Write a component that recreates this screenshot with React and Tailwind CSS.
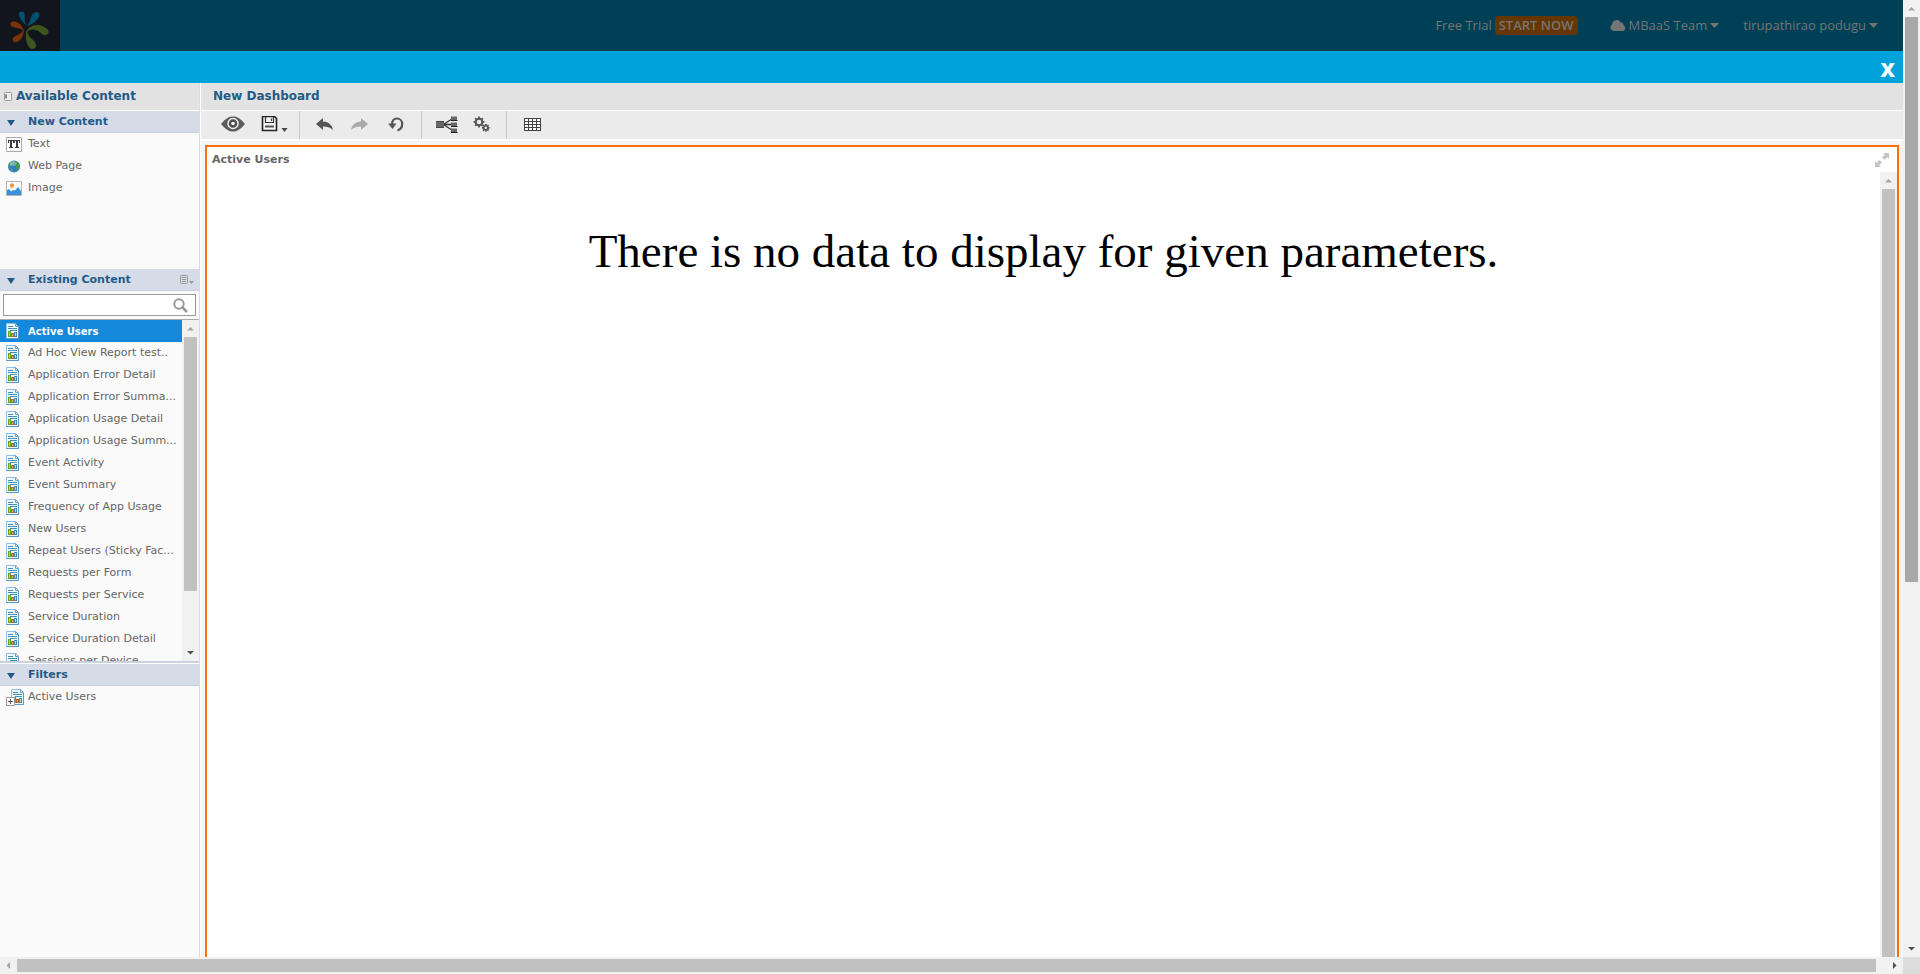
import React from "react";

const reports = [
  "Active Users",
  "Ad Hoc View Report test..",
  "Application Error Detail",
  "Application Error Summa...",
  "Application Usage Detail",
  "Application Usage Summ...",
  "Event Activity",
  "Event Summary",
  "Frequency of App Usage",
  "New Users",
  "Repeat Users (Sticky Fac...",
  "Requests per Form",
  "Requests per Service",
  "Service Duration",
  "Service Duration Detail",
  "Sessions per Device",
];

function Logo() {
  return (
    <svg width="60" height="51" viewBox="0 0 60 51" aria-hidden="true">
      <path d="M26.500 25.500C22 22 18.500 17 19 13.500C19.500 10.800 24 10.800 24.800 14C25 18 24 21 26.500 25.500Z" fill="#005070" />
      <path d="M27 25.500C32 25.500 38 20 39.300 16C40.300 12.500 37 11 34 13C30 15.500 31 22 27 25.500Z" fill="#005070" />
      <path d="M23.500 31C22.500 29 19 28.500 15 27.500C10 27 9 23 12 21.800C17 20.500 22 24 23.500 31Z" fill="#7a3206" />
      <path d="M23.500 28C25 35 20 42.500 15 42.200C11.500 41 12 37.500 15.500 36C20 34 22.500 33 23.500 28Z" fill="#7a3206" />
      <path d="M26.500 33C27 26 37 22.500 44 27C49.500 29 50 34 46 35C42 36 41 32 37 30.500C33 29 29.500 29 26.500 33Z" fill="#3c561e" />
      <path d="M26.500 30C24.500 38 27 46.500 31 48.800C35 49.800 37 46.500 35.500 43C34 39.500 28.500 38 26.500 30Z" fill="#3c561e" />
    </svg>
  );
}

function Caret({ className = "" }) {
  return (
    <svg width="9" height="5" viewBox="0 0 9 5" className={className} aria-hidden="true">
      <path d="M0 0h9L4.500 5z" fill="currentColor" />
    </svg>
  );
}

function ReportIcon({ filter = false }) {
  return (
    <svg width={filter ? 18 : 13} height="17" viewBox={filter ? "0 0 18 17" : "0 0 13 17"} aria-hidden="true">
      <g transform={filter ? "translate(5 0)" : undefined}>
        <path d="M.5 .5h9l3 3V15.500H.5z" fill="#f2f9fe" stroke="#8fc0ea" />
        <path d="M.5 15.500h12V4" fill="none" stroke="#5b97cf" />
        <path d="M9.500 .5v3h3z" fill="#fff" stroke="#67a3d6" />
        <path d="M2 3.500h5M2 5.500h9M4 7.500h7" stroke="#3c93b0" />
        <path d="M2 8h3v6H2z" fill="#6f9f1e" />
        <path d="M3 9h1v4H3z" fill="#b4d651" />
        <path d="M5 10h3v4H5z" fill="#b9652a" />
        <path d="M6 11h1v2H6z" fill="#f0a866" />
        <path d="M8 9h3v5H8z" fill="#3f8fb3" />
        <path d="M9 10h1v3H9z" fill="#a5dcec" />
      </g>
      {filter && (
        <g>
          <path d="M.5 8.500h8v8h-8z" fill="#fff" stroke="#9a9a9a" />
          <path d="M2 12.500h5M4.500 10v5" stroke="#555" />
        </g>
      )}
    </svg>
  );
}

function TextIcon() {
  return (
    <svg width="16" height="15" viewBox="0 0 16 15" aria-hidden="true">
      <path d="M.5.5h15v14H.5z" fill="#fff" stroke="#aaa" />
      <path d="M2 3h6v3H7V4H6v6h1v1H3v-1h1V4H3v2H2zM8 3h6v3h-1V4h-1v6h1v1H9v-1h1V4H9v2H8z" fill="#3a3a3a" />
    </svg>
  );
}

function GlobeIcon() {
  return (
    <svg width="16" height="13" viewBox="0 0 16 13" aria-hidden="true">
      <circle cx="8" cy="6.500" r="6" fill="#2f7fc0" />
      <path d="M3 3.500C5 1 7 .5 8 1l1 2-2 2-2 1-2 1-1-1z" fill="#4f9f6f" />
      <path d="M10 2l3 1 1 3-1 3-2 1-1-3-1-2z" fill="#46964e" />
      <path d="M5 8l2 1v3L5 11z" fill="#4f9f6f" />
      <ellipse cx="7" cy="3.500" rx="3.500" ry="2.500" fill="#d8f0f6" opacity=".35" />
    </svg>
  );
}

function ImageIcon() {
  return (
    <svg width="16" height="15" viewBox="0 0 16 15" aria-hidden="true">
      <path d="M.5.5h15v14H.5z" fill="#fff" stroke="#b4b4b4" />
      <circle cx="6" cy="4.500" r="2.200" fill="#e8974a" />
      <path d="M1 9l2-1 2 2.500L7 9l2 .500L12 6l3 4v4H1z" fill="#3a8fd8" />
    </svg>
  );
}

function SectionHeader({ title, children }) {
  return (
    <div className="flex h-[22px] shrink-0 items-center border-b border-[#c5cfdd] bg-[#d5dce8] pr-[5px] pl-[7px]">
      <button aria-label={"Collapse " + title} className="w-[21px] pt-[3px] text-[#1f5b88]">
        <svg width="8" height="6" viewBox="0 0 8 6" aria-hidden="true">
          <path d="M0 0h8L4 6z" fill="currentColor" />
        </svg>
      </button>
      <h2 className="flex-1 text-[11px] leading-[20px] font-bold text-[#1f5b88]">{title}</h2>
      {children}
    </div>
  );
}

function Item({ icon, label, selected }) {
  return (
    <li>
      <button
        className={
          selected
            ? "flex h-[22px] w-full items-center bg-[#1488da] pl-[6px] text-left text-[11px] text-white"
            : "flex h-[22px] w-full items-center pl-[6px] text-left text-[11px] text-[#666]"
        }
      >
        <span className="w-[22px] shrink-0">{icon}</span>
        <span className={selected ? "text-[10px] font-bold whitespace-nowrap" : "whitespace-nowrap"}>{label}</span>
      </button>
    </li>
  );
}

const arrows = {
  up: "M5 10.500L8.500 7L12 10.500z",
  down: "M5 7L8.500 10.500L12 7z",
  left: "M10 5L6.500 8.500L10 12z",
  right: "M7 5L10.500 8.500L7 12z",
};

function ScrollArrow({ dir, dark }) {
  return (
    <button aria-label={"Scroll " + dir} className="size-[17px] shrink-0">
      <svg width="17" height="17" viewBox="0 0 17 17" aria-hidden="true">
        <path d={arrows[dir]} fill={dark ? "#505050" : "#a3a3a3"} />
      </svg>
    </button>
  );
}

function Separator() {
  return <span className="h-7 w-px bg-[#cbcbcb]" />;
}

function Tool({ label, className, children }) {
  return (
    <button aria-label={label} className={"flex h-7 items-center justify-center pb-[2px] text-[#555] " + className}>
      {children}
    </button>
  );
}

function Gear({ cx, cy, r, w }) {
  const teeth = [0, 45, 90, 135, 180, 225, 270, 315];
  return (
    <g>
      <circle cx={cx} cy={cy} r={r} fill="none" stroke="currentColor" strokeWidth={w} />
      {teeth.map((a) => (
        <path
          key={a}
          d={`M${cx - 0.9} ${cy - r - w / 2 - 1.1}h1.800v1.600h-1.800z`}
          transform={`rotate(${a} ${cx} ${cy})`}
          fill="currentColor"
        />
      ))}
    </g>
  );
}

function Toolbar() {
  return (
    <div className="flex h-7 shrink-0 items-center bg-[#ebebeb]">
      <Tool label="Preview" className="ml-4 w-[31px]">
        <svg width="24" height="16" viewBox="0 0 24 16">
          <path d="M0 8C5 2 8.500.5 12 .5S19 2 24 8c-5 6-8.500 7.500-12 7.500S5 14 0 8z" fill="#5c5c5c" />
          <circle cx="12" cy="7.500" r="5" fill="#4d4d4d" stroke="#ebebeb" strokeWidth="1.500" />
          <circle cx="12" cy="7.500" r="1.800" fill="#fff" />
        </svg>
      </Tool>
      <Tool label="Save" className="ml-[11px] w-[31px]">
        <svg width="27" height="16" viewBox="0 0 27 16">
          <path d="M1.500 .5h12l2 2v12h-14z" fill="#f4f4f4" stroke="#222" strokeWidth="1.600" />
          <path d="M4.500 1v5.500h8V1M10.500 2.500v2.500" fill="none" stroke="#333" strokeWidth="1.200" />
          <path d="M4 9.500h9v2H4z" fill="#555" />
          <path d="M20.500 12h6l-3 4z" fill="#444" />
        </svg>
      </Tool>
      <span className="w-[9px]" />
      <Separator />
      <Tool label="Undo" className="ml-[12px] w-[24px]">
        <svg width="17" height="13" viewBox="0 0 17 13">
          <path d="M0 6L7 0v3.500c5 0 9 3 10 8.500C14 9 11 8.500 7 8.500V12z" fill="currentColor" />
        </svg>
      </Tool>
      <Tool label="Redo" className="ml-[11px] w-[24px]">
        <svg width="17" height="13" viewBox="0 0 17 13">
          <path d="M17 6L10 0v3.500C5 3.500 1 6.500 0 12c3-3 6-3.500 10-3.500V12z" fill="#aaa" />
        </svg>
      </Tool>
      <Tool label="Undo all" className="ml-[13px] w-[24px]">
        <svg width="16" height="15" viewBox="0 0 16 15">
          <path d="M4 8C4 4 6 1.500 9 1.500S14.200 4 14.200 7c0 3-2 5.500-4.700 6.500" fill="none" stroke="currentColor" strokeWidth="2.200" />
          <path d="M0 6.500h8.500L4.500 12z" fill="currentColor" />
        </svg>
      </Tool>
      <span className="w-[13px]" />
      <Separator />
      <Tool label="Filter manager" className="ml-[12px] w-[26px]">
        <svg width="22" height="17" viewBox="0 0 22 17">
          <path d="M8 8L16 3M8 8.500h8M8 9l8 5" stroke="#333" strokeWidth="1.300" />
          <path d="M0 5h8v7H0z" fill="#666" />
          <path d="M0 5.500h8M0 11.500h8" stroke="#444" />
          <path d="M15 .5h6v4h-6zM15 6.500h6v4h-6zM15 12.500h6v4h-6z" fill="#666" />
          <path d="M15 4.500h6.500M15 10.500h6.500M15 16.500h6.500" stroke="#222" />
        </svg>
      </Tool>
      <Tool label="Dashboard properties" className="ml-2 w-[26px]">
        <svg width="17" height="16" viewBox="0 0 17 16">
          <Gear cx={6} cy={6} r={3.300} w={2} />
          <Gear cx={12.800} cy={11.800} r={2} w={1.500} />
        </svg>
      </Tool>
      <span className="w-[12px]" />
      <Separator />
      <Tool label="Show grid" className="ml-[12px] w-[26px]">
        <svg width="17" height="13" viewBox="0 0 17 13">
          <path d="M0 0h17v13H0z" fill="#fff" />
          <path d="M0 .5h17M0 3.500h17M0 6.500h17M0 9.500h17M0 12.500h17M.5 0v13M4.500 0v13M8.500 0v13M12.500 0v13M16.500 0v13" stroke="#444" />
        </svg>
      </Tool>
    </div>
  );
}

function Sidebar() {
  return (
    <aside className="flex w-[200px] shrink-0 flex-col border-r border-[#dcdcdc] bg-[#fafafa]">
      <div className="flex h-7 shrink-0 items-center border-b border-white bg-[#e2e2e2] pl-1">
        <button aria-label="Collapse panel">
          <svg width="8" height="9" viewBox="0 0 8 9" className="block">
            <rect x=".5" y=".5" width="7" height="8" rx="1" fill="#eee" stroke="#999" />
            <path d="M1 2.500h2v4H1z" fill="#888" />
          </svg>
        </button>
        <h1 className="pb-[2px] pl-1 text-[12px] leading-4 font-bold text-[#1f5b88]">Available Content</h1>
      </div>
      <section className="h-[158px] shrink-0">
        <SectionHeader title="New Content" />
        <ul>
          <Item icon={<TextIcon />} label="Text" />
          <Item icon={<GlobeIcon />} label="Web Page" />
          <Item icon={<ImageIcon />} label="Image" />
        </ul>
      </section>
      <section className="shrink-0">
        <SectionHeader title="Existing Content">
          <button aria-label="Content options" className="text-[#999]">
            <svg width="14" height="9" viewBox="0 0 14 9" className="block">
              <rect x=".5" y=".5" width="7" height="8" rx="1" fill="none" stroke="currentColor" />
              <path d="M2 2.500h4M2 4.500h4M2 6.500h4" stroke="currentColor" />
              <path d="M9 6h5l-2.500 3z" fill="currentColor" />
            </svg>
          </button>
        </SectionHeader>
        <div className="border-b border-[#aaa] px-[3px] pt-[3px] pb-[3px]">
          <div className="flex h-[22px] items-center border border-[#999] bg-white pr-[7px]">
            <input aria-label="Search content" className="h-full min-w-0 flex-1 px-1 text-[11px] outline-none" />
            <button aria-label="Search" className="text-[#999]">
              <svg width="15" height="15" viewBox="0 0 15 15" className="block">
                <circle cx="6" cy="6" r="4.700" fill="none" stroke="currentColor" strokeWidth="2" />
                <path d="M9.500 9.500L14 14" stroke="currentColor" strokeWidth="2.600" />
              </svg>
            </button>
          </div>
        </div>
        <div className="flex h-[343px] border-b-2 border-[#c9d3df]">
          <ul className="min-w-0 flex-1 overflow-hidden">
            {reports.map((r, i) => (
              <Item key={r} icon={<ReportIcon />} label={r} selected={i === 0} />
            ))}
          </ul>
          <div className="flex w-[17px] shrink-0 flex-col items-center bg-[#f1f1f1]">
            <ScrollArrow dir="up" />
            <div className="h-[254px] w-[13px] bg-[#c1c1c1]" />
            <div className="flex-1" />
            <ScrollArrow dir="down" dark />
          </div>
        </div>
      </section>
      <section className="border-t border-white">
        <SectionHeader title="Filters" />
        <ul>
          <Item icon={<ReportIcon filter />} label="Active Users" />
        </ul>
      </section>
    </aside>
  );
}

function Dashboard() {
  return (
    <main className="ml-px flex min-w-0 flex-1 flex-col bg-[#f5f5f5]">
      <div className="flex h-7 shrink-0 items-center border-b border-white bg-[#e2e2e2] pl-3">
        <h1 className="pb-[2px] text-[12px] leading-4 font-bold text-[#1f5b88]">New Dashboard</h1>
      </div>
      <Toolbar />
      <div className="h-[2px] shrink-0 bg-white" />
      <div className="flex min-h-0 flex-1 pt-1 pr-1 pl-1">
        <section className="flex min-w-0 flex-1 flex-col border-2 border-b-0 border-[#ff6d12] bg-white">
          <div className="flex h-[25px] shrink-0 items-center justify-between pr-2 pl-[5px]">
            <h2 className="text-[11px] leading-4 font-bold text-[#666]">Active Users</h2>
            <button aria-label="Maximize" className="text-[#c4c4c4]">
              <svg width="14" height="14" viewBox="0 0 14 14" className="block">
                <path d="M8 0h6v6l-1.800-1.800L9.500 7 7 4.500l2.800-2.700zM0 14V8l1.800 1.800L4.500 7 7 9.500l-2.800 2.700L6 14z" fill="currentColor" />
              </svg>
            </button>
          </div>
          <div className="flex min-h-0 flex-1">
            <div className="min-w-0 flex-1 pt-[52px] text-center">
              <p className="font-['Liberation_Serif',serif] text-[47px] leading-[54px] text-black">
                There is no data to display for given parameters.
              </p>
            </div>
            <div className="flex w-[17px] shrink-0 flex-col items-center bg-[#f1f1f1]">
              <ScrollArrow dir="up" />
              <div className="w-[13px] flex-1 bg-[#c1c1c1]" />
            </div>
          </div>
        </section>
      </div>
    </main>
  );
}

export default function App() {
  return (
    <div className="flex h-screen flex-col overflow-hidden bg-white font-['DejaVu_Sans',sans-serif]">
      <div className="flex min-h-0 flex-1">
        <div className="flex min-w-0 flex-1 flex-col">
          <header className="flex h-[51px] shrink-0 items-center bg-[#004056] font-['Open_Sans',sans-serif] text-[13px] text-[#757575]">
            <a href="#" aria-label="Home" className="h-[51px] w-[60px] bg-[#12151b]">
              <Logo />
            </a>
            <nav className="ml-auto flex items-center pr-[25px] leading-[19px]">
              <span>Free Trial</span>
              <button className="ml-[3px] h-[19px] rounded bg-[#663600] px-1 font-semibold">START NOW</button>
              <button className="ml-8 flex items-center">
                <svg width="16" height="11" viewBox="0 0 16 11" aria-hidden="true">
                  <path d="M3.500 11A3.500 3.500 0 0 1 2 4.600 4.700 4.700 0 0 1 10.800 2.500a2.500 2.500 0 0 1 2.700 3A2.900 2.900 0 0 1 13 11z" fill="currentColor" />
                </svg>
                <span className="ml-[3px]">MBaaS Team</span>
                <Caret className="ml-[3px]" />
              </button>
              <button className="ml-6 flex items-center">
                <span>tirupathirao podugu</span>
                <Caret className="ml-[3px]" />
              </button>
            </nav>
          </header>
          <div className="flex h-8 shrink-0 items-center justify-end bg-[#00a2db] pr-2">
            <button aria-label="Close" className="pt-[5px] font-['Open_Sans',sans-serif] text-[20px] leading-5 font-extrabold text-white">
              X
            </button>
          </div>
          <div className="flex min-h-0 flex-1">
            <Sidebar />
            <Dashboard />
          </div>
        </div>
        <div className="flex w-[17px] shrink-0 flex-col items-center bg-[#f1f1f1]">
          <ScrollArrow dir="up" />
          <div className="h-[59%] w-[13px] bg-[#a8a8a8]" />
          <div className="flex-1" />
          <ScrollArrow dir="down" dark />
        </div>
      </div>
      <div className="flex h-[17px] shrink-0 items-center bg-[#f1f1f1]">
        <ScrollArrow dir="left" />
        <div className="h-[13px] flex-1 bg-[#c1c1c1]" />
        <div className="w-[10px]" />
        <ScrollArrow dir="right" dark />
        <div className="size-[17px] bg-[#dcdcdc]" />
      </div>
    </div>
  );
}
